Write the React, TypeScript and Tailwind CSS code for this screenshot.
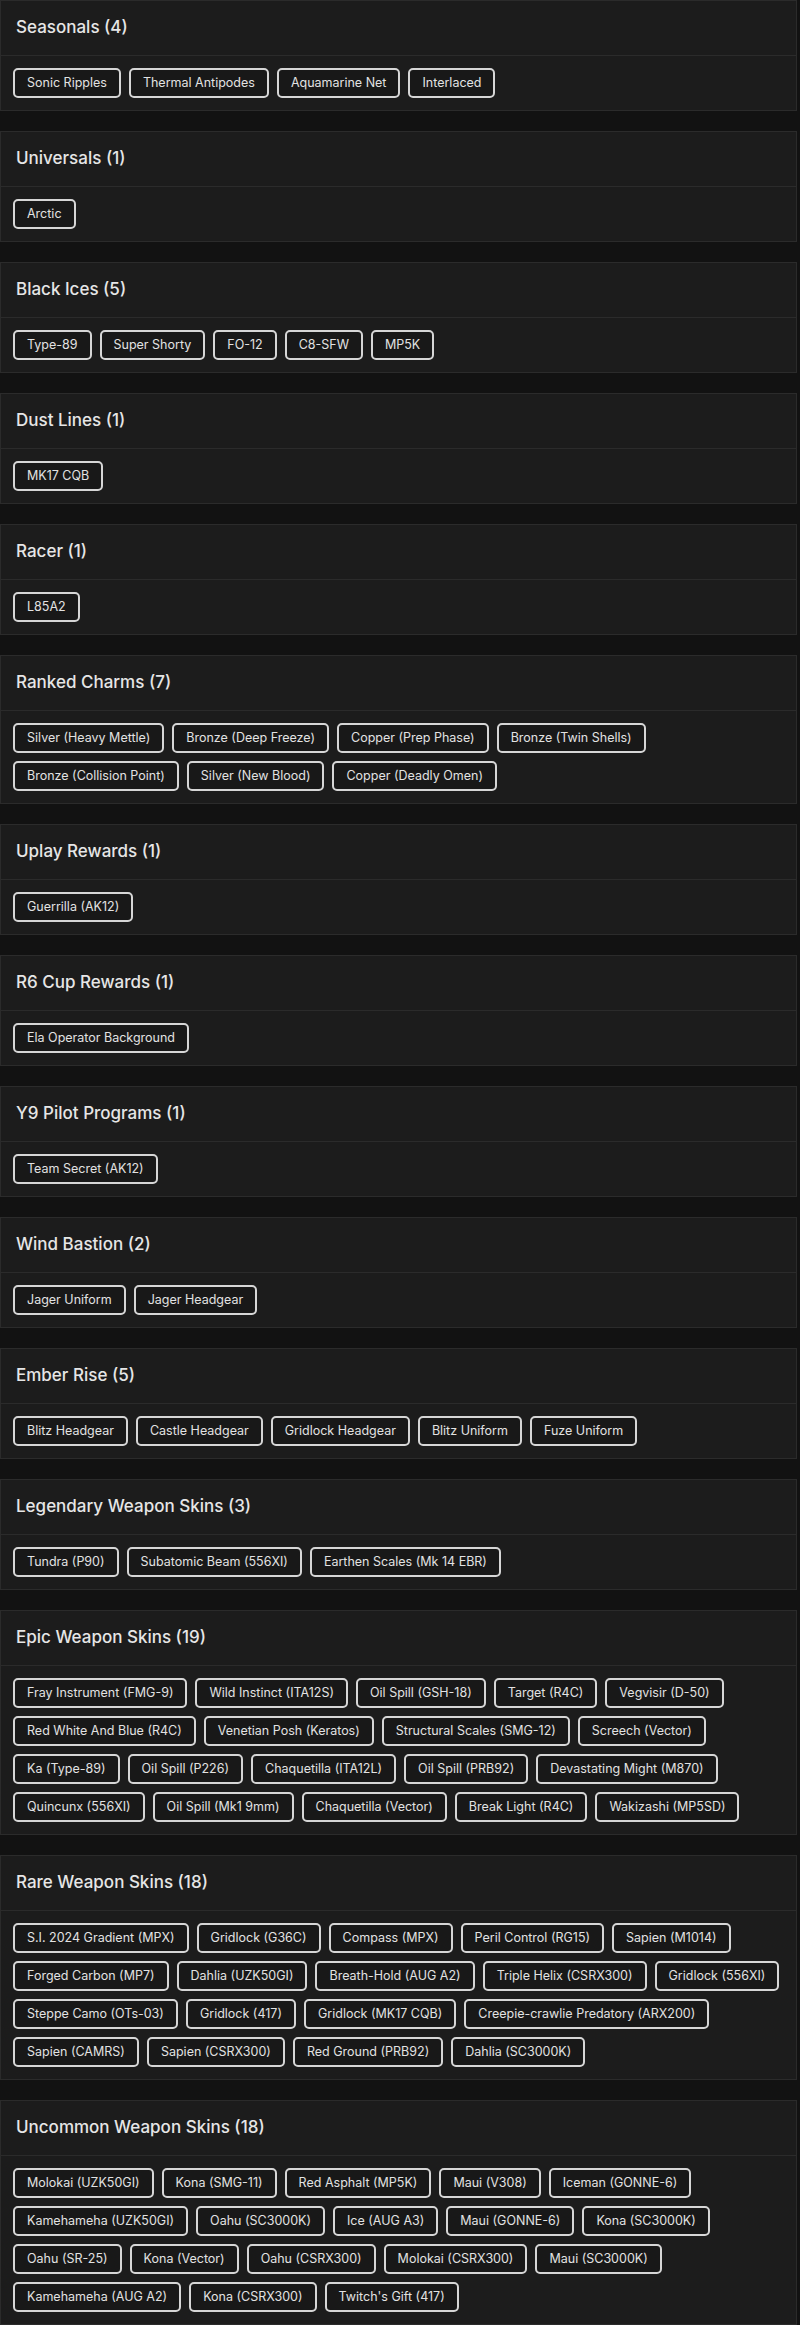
import React from 'react'

interface Section {
  title: string
  items: string[]
}

const sections: Section[] = [
  { title: 'Seasonals', items: ['Sonic Ripples', 'Thermal Antipodes', 'Aquamarine Net', 'Interlaced'] },
  { title: 'Universals', items: ['Arctic'] },
  { title: 'Black Ices', items: ['Type-89', 'Super Shorty', 'FO-12', 'C8-SFW', 'MP5K'] },
  { title: 'Dust Lines', items: ['MK17 CQB'] },
  { title: 'Racer', items: ['L85A2'] },
  {
    title: 'Ranked Charms',
    items: [
      'Silver (Heavy Mettle)',
      'Bronze (Deep Freeze)',
      'Copper (Prep Phase)',
      'Bronze (Twin Shells)',
      'Bronze (Collision Point)',
      'Silver (New Blood)',
      'Copper (Deadly Omen)',
    ],
  },
  { title: 'Uplay Rewards', items: ['Guerrilla (AK12)'] },
  { title: 'R6 Cup Rewards', items: ['Ela Operator Background'] },
  { title: 'Y9 Pilot Programs', items: ['Team Secret (AK12)'] },
  { title: 'Wind Bastion', items: ['Jager Uniform', 'Jager Headgear'] },
  {
    title: 'Ember Rise',
    items: ['Blitz Headgear', 'Castle Headgear', 'Gridlock Headgear', 'Blitz Uniform', 'Fuze Uniform'],
  },
  {
    title: 'Legendary Weapon Skins',
    items: ['Tundra (P90)', 'Subatomic Beam (556XI)', 'Earthen Scales (Mk 14 EBR)'],
  },
  {
    title: 'Epic Weapon Skins',
    items: [
      'Fray Instrument (FMG-9)',
      'Wild Instinct (ITA12S)',
      'Oil Spill (GSH-18)',
      'Target (R4C)',
      'Vegvisir (D-50)',
      'Red White And Blue (R4C)',
      'Venetian Posh (Keratos)',
      'Structural Scales (SMG-12)',
      'Screech (Vector)',
      'Ka (Type-89)',
      'Oil Spill (P226)',
      'Chaquetilla (ITA12L)',
      'Oil Spill (PRB92)',
      'Devastating Might (M870)',
      'Quincunx (556XI)',
      'Oil Spill (Mk1 9mm)',
      'Chaquetilla (Vector)',
      'Break Light (R4C)',
      'Wakizashi (MP5SD)',
    ],
  },
  {
    title: 'Rare Weapon Skins',
    items: [
      'S.I. 2024 Gradient (MPX)',
      'Gridlock (G36C)',
      'Compass (MPX)',
      'Peril Control (RG15)',
      'Sapien (M1014)',
      'Forged Carbon (MP7)',
      'Dahlia (UZK50GI)',
      'Breath-Hold (AUG A2)',
      'Triple Helix (CSRX300)',
      'Gridlock (556XI)',
      'Steppe Camo (OTs-03)',
      'Gridlock (417)',
      'Gridlock (MK17 CQB)',
      'Creepie-crawlie Predatory (ARX200)',
      'Sapien (CAMRS)',
      'Sapien (CSRX300)',
      'Red Ground (PRB92)',
      'Dahlia (SC3000K)',
    ],
  },
  {
    title: 'Uncommon Weapon Skins',
    items: [
      'Molokai (UZK50GI)',
      'Kona (SMG-11)',
      'Red Asphalt (MP5K)',
      'Maui (V308)',
      'Iceman (GONNE-6)',
      'Kamehameha (UZK50GI)',
      'Oahu (SC3000K)',
      'Ice (AUG A3)',
      'Maui (GONNE-6)',
      'Kona (SC3000K)',
      'Oahu (SR-25)',
      'Kona (Vector)',
      'Oahu (CSRX300)',
      'Molokai (CSRX300)',
      'Maui (SC3000K)',
      'Kamehameha (AUG A2)',
      'Kona (CSRX300)',
      "Twitch's Gift (417)",
    ],
  },
]

function SectionCard({ section }: { section: Section }) {
  return (
    <div className="bg-[#1c1c1c] border border-[#2b2b2b]">
      {/* Header */}
      <div className="h-[55px] flex items-center px-[15px] border-b border-[#2b2b2b]">
        <h2 className="text-[17px] font-medium text-[#e6e6e6]">
          {section.title} ({section.items.length})
        </h2>
      </div>

      {/* Items */}
      <div className="flex flex-wrap gap-2 p-3">
        {section.items.map((item) => (
          <span
            key={item}
            className="h-[30px] flex items-center px-3 border-2 border-[#d6d6d6] rounded-[5px] bg-[#181818] text-[12.5px] text-[#e2e2e2] whitespace-nowrap"
          >
            {item}
          </span>
        ))}
      </div>
    </div>
  )
}

export default function App() {
  return (
    <div
      className="min-h-screen bg-[#121212] flex flex-col gap-5 pr-[3px]"
      style={{ fontFamily: 'Inter, "Noto Sans", sans-serif' }}
    >
      {sections.map((section) => (
        <SectionCard key={section.title} section={section} />
      ))}
    </div>
  )
}
